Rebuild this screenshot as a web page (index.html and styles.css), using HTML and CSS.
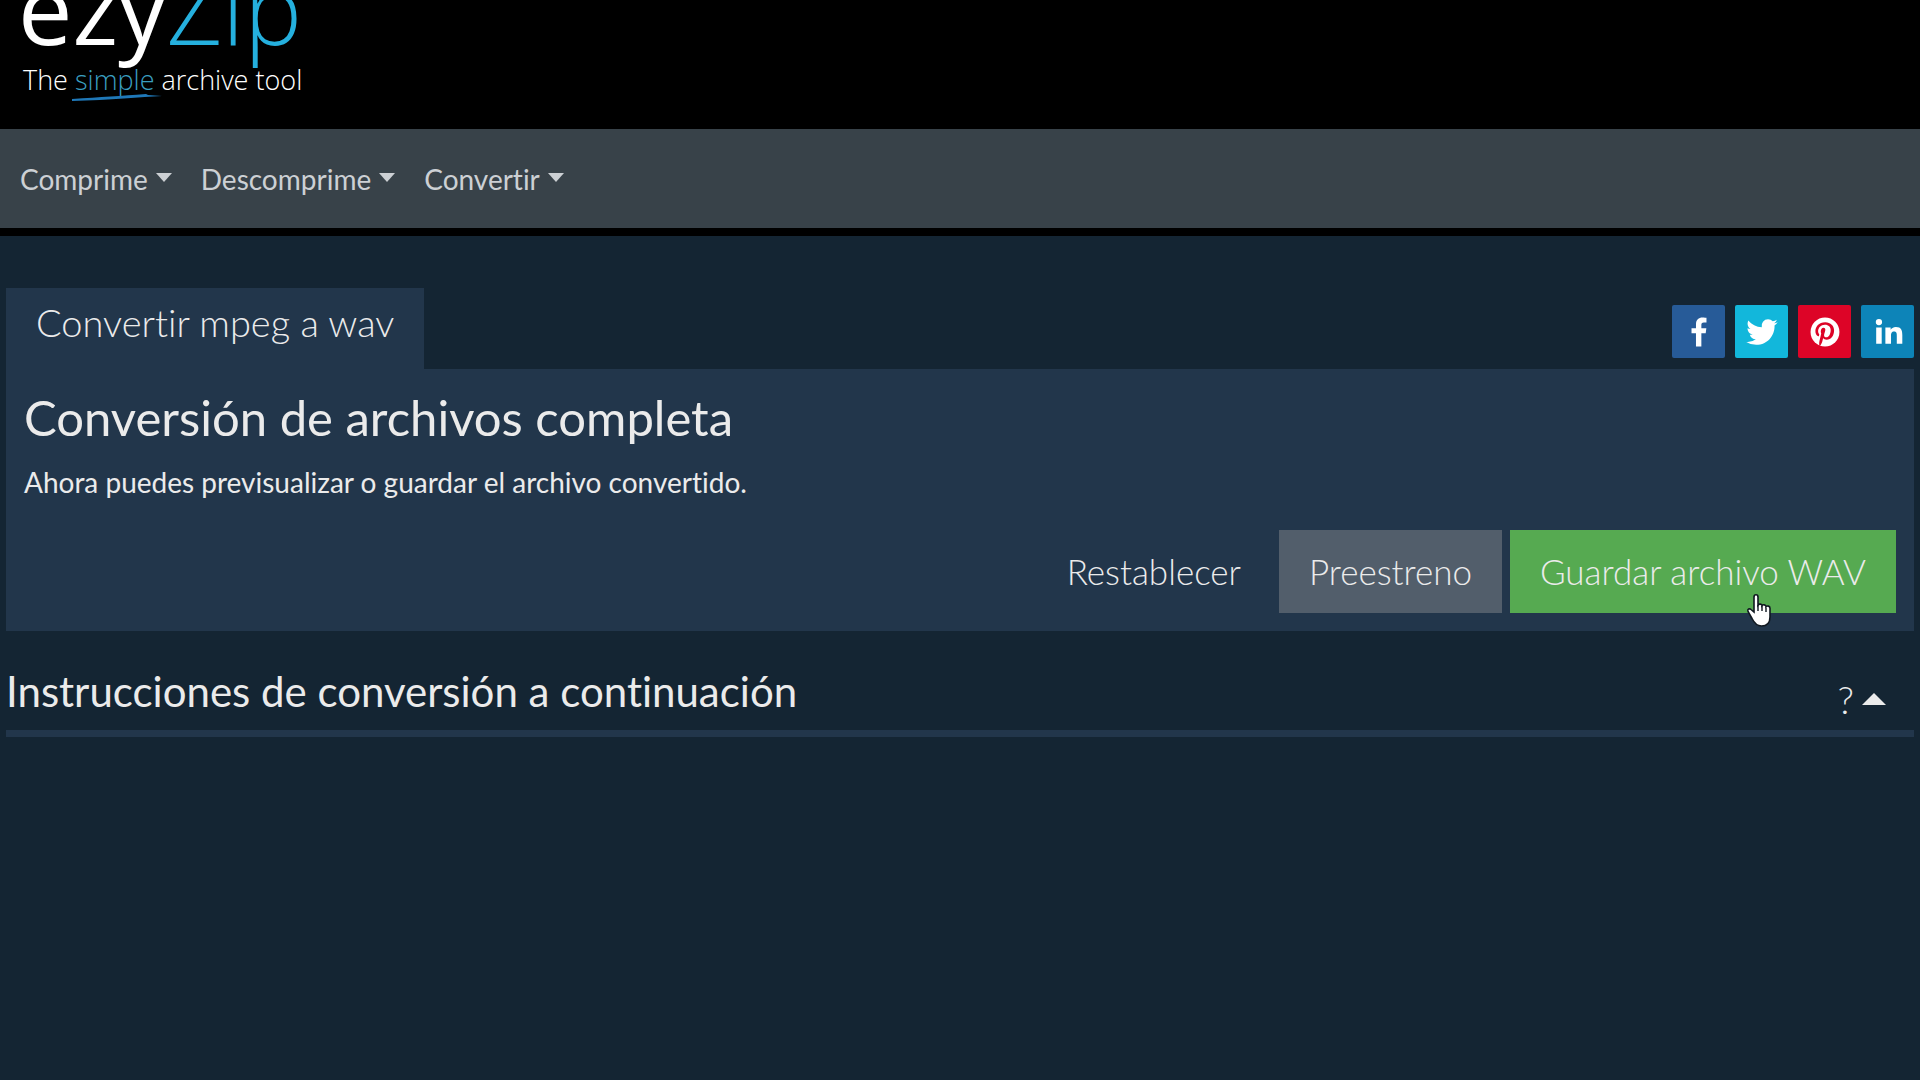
FILE: index.html
```html
<!DOCTYPE html>
<html lang="es">
<head>
  <meta charset="utf-8">
  <meta name="viewport" content="width=device-width, initial-scale=1">
  <title>Convertir mpeg a wav - ezyZip</title>
  <link rel="stylesheet" href="styles.css">
</head>
<body>
  <header class="site-header">
    <a class="logo" href="#">
      <span class="logo-name">ezy<span class="logo-zip">Zip</span></span>
      <span class="logo-tagline">The <span class="logo-simple">simple<svg class="logo-stroke" viewBox="0 0 92 8" aria-hidden="true"><path d="M1 5C30 3 50 2 75 0L77 1L91 2C70 3 40 6 1 7Z" fill="#1f78b8"/></svg></span> archive tool</span>
    </a>
  </header>

  <nav class="navbar">
    <button class="nav-link" type="button">Comprime</button>
    <button class="nav-link" type="button">Descomprime</button>
    <button class="nav-link" type="button">Convertir</button>
  </nav>

  <main class="container">
    <div class="tab-row">
      <a class="tab" href="#converter">Convertir mpeg a wav</a>
      <div class="share">
        <a class="share-btn facebook" href="#" aria-label="Facebook">
          <svg viewBox="0 0 32 32"><path d="M17.8 27V17h3.3l.5-3.9h-3.8v-2.5c0-1.1.3-1.9 1.9-1.9h2V5.200c-.4 0-1.600-.2-3-.2-3 0-5 1.800-5 5.200v2.900h-3.400V17h3.400v10z"/></svg>
        </a>
        <a class="share-btn twitter" href="#" aria-label="Twitter">
          <svg viewBox="0 0 32 32"><path d="M28 8.557a9.913 9.913 0 0 1-2.828.775 4.930 4.930 0 0 0 2.166-2.725 9.738 9.738 0 0 1-3.130 1.194 4.920 4.920 0 0 0-3.593-1.550 4.924 4.924 0 0 0-4.794 6.049c-4.090-.21-7.720-2.170-10.150-5.150a4.942 4.942 0 0 0-.665 2.477c0 1.710.870 3.214 2.190 4.100a4.968 4.968 0 0 1-2.230-.616v.060c0 2.390 1.700 4.380 3.952 4.830-.414.115-.850.174-1.297.174-.318 0-.626-.030-.928-.086a4.935 4.935 0 0 0 4.600 3.420 9.893 9.893 0 0 1-6.114 2.107c-.398 0-.790-.023-1.175-.068a13.953 13.953 0 0 0 7.550 2.213c9.056 0 14.010-7.507 14.010-14.013 0-.213-.005-.426-.015-.637.960-.695 1.795-1.560 2.455-2.550z"/></svg>
        </a>
        <a class="share-btn pinterest" href="#" aria-label="Pinterest">
          <svg viewBox="0 0 32 32"><circle cx="16" cy="16" r="11"/><path class="pin-mark" transform="translate(3 5) scale(.8)" d="M16.539 4.500c-6.277 0-9.442 4.500-9.442 8.253 0 2.272.860 4.293 2.705 5.046.303.125.574.005.662-.330.061-.231.205-.816.270-1.060.088-.331.053-.447-.191-.736-.532-.627-.873-1.439-.873-2.591 0-3.338 2.498-6.327 6.505-6.327 3.548 0 5.497 2.168 5.497 5.062 0 3.810-1.686 7.025-4.188 7.025-1.382 0-2.416-1.142-2.085-2.545.397-1.674 1.166-3.480 1.166-4.689 0-1.081-.581-1.983-1.782-1.983-1.413 0-2.548 1.462-2.548 3.419 0 1.247.421 2.091.421 2.091l-1.699 7.199c-.505 2.137-.076 4.755-.039 5.019.021.158.223.196.314.077.130-.170 1.813-2.247 2.384-4.324.162-.587.929-3.631.929-3.631.460.876 1.801 1.646 3.227 1.646 4.247 0 7.128-3.871 7.128-9.053.001-3.918-3.317-7.568-8.361-7.568z"/></svg>
        </a>
        <a class="share-btn linkedin" href="#" aria-label="LinkedIn">
          <svg viewBox="0 0 32 32"><path d="M7 12.500h4.200V25H7zM9.100 6a2.400 2.400 0 1 1 0 4.800 2.400 2.400 0 0 1 0-4.800zM14 12.500h4v1.800c.6-1.100 2-2.200 4-2.200 4.100 0 4.900 2.700 4.900 6.100V25h-4.200v-6c0-1.500 0-3.300-2-3.300s-2.400 1.500-2.400 3.200V25H14z"/></svg>
        </a>
      </div>
    </div>

    <section class="panel" id="converter">
      <h1>Conversión de archivos completa</h1>
      <p>Ahora puedes previsualizar o guardar el archivo convertido.</p>
      <div class="actions">
        <button class="btn" type="button">Restablecer</button>
        <button class="btn btn-secondary" type="button">Preestreno</button>
        <button class="btn btn-success" type="button">Guardar archivo WAV
          <svg class="cursor" viewBox="0 0 26 36" aria-hidden="true"><path d="M8 4c0-3 4-3 4 0v8c1-1.500 4-1 4 .6 1-1.400 4-.8 4 1 1.200-1.200 4-.6 4 1.600v8.800c0 6-3.500 9-8.500 9-5 0-7.500-3.500-9.500-7.500l-4-7c-1-2.400 1.500-3.400 3-2L8 19z" fill="#fff" stroke="#101820" stroke-width="1.600"/><path d="M12 12v6M16 13v5M20 14.500V19" fill="none" stroke="#101820" stroke-width="1.400"/></svg>
        </button>
      </div>
    </section>

    <section class="instructions">
      <h2>Instrucciones de conversión a continuación</h2>
      <button class="toggle" type="button">?</button>
    </section>
  </main>
</body>
</html>
```
FILE: styles.css
```css
* {
  box-sizing: border-box;
}

body {
  margin: 0;
  min-height: 100vh;
  background-color: #142533;
  color: #ebebeb;
  font-family: Lato, "Open Sans", sans-serif;
  font-size: 28px;
  font-variant-ligatures: none;
  overflow-x: hidden;
}

a {
  color: inherit;
  text-decoration: none;
}

button {
  border: none;
  background: none;
  color: inherit;
  font-family: inherit;
  font-variant-ligatures: inherit;
  cursor: pointer;
}

/* Header */
.site-header {
  display: flex;
  align-items: flex-end;
  height: 129px;
  padding: 0 18px 31px;
  overflow: hidden;
  background-color: #000;
}

.logo {
  display: flex;
  flex-direction: column;
  gap: 9px;
  font-family: "Open Sans", sans-serif;
  color: #fff;
}

.logo-name {
  font-size: 97px;
  line-height: 92px;
}

.logo-zip {
  color: #25b0de;
  font-weight: 300;
}

.logo-tagline {
  padding-left: 5px;
  font-size: 27px;
  font-weight: 300;
  line-height: 36px;
}

.logo-simple {
  position: relative;
  color: #3a9fc0;
}

.logo-stroke {
  position: absolute;
  left: -4px;
  bottom: -4px;
  width: 92px;
  height: 8px;
}

/* Menu */
.navbar {
  display: flex;
  gap: 29px;
  padding: 31px 20px 29px;
  border-bottom: 8px solid #000;
  background-color: #384249;
}

.nav-link {
  display: flex;
  align-items: center;
  gap: 8px;
  padding: 0;
  font-size: 28px;
  line-height: 39px;
  color: #ccd0d4;
}

.nav-link::after {
  content: "";
  margin-bottom: 4px;
  border-top: 9px solid;
  border-right: 8px solid transparent;
  border-left: 8px solid transparent;
}

/* Content */
.container {
  padding: 52px 6px 0;
}

.tab-row {
  display: flex;
  justify-content: space-between;
  align-items: center;
}

.tab {
  padding: 10px 30px 23px;
  background-color: #22364b;
  font-size: 38px;
  font-weight: 300;
  line-height: 48px;
}

.share {
  display: flex;
  gap: 10px;
  padding-top: 6px;
}

.share-btn {
  display: flex;
  align-items: center;
  justify-content: center;
  width: 53px;
  height: 53px;
  border-radius: 2px;
}

.share-btn svg {
  width: 42px;
  height: 42px;
  fill: #fff;
}

.facebook {
  background-color: #275b98;
}

.twitter {
  background-color: #12b7db;
}

.pinterest {
  background-color: #dd0427;
}

.share-btn .pin-mark {
  fill: #dd0427;
}

.linkedin {
  background-color: #0d84b8;
}

.panel {
  padding: 18px;
  background-color: #22364b;
}

.panel h1 {
  margin: 0;
  font-size: 49px;
  font-weight: 400;
  line-height: 60px;
}

.panel p {
  margin: 15px 0 28px;
  line-height: 40px;
}

.actions {
  display: flex;
  justify-content: flex-end;
  gap: 8px;
}

.btn {
  position: relative;
  padding: 18px 30px;
  font-size: 35px;
  font-weight: 300;
  line-height: 47px;
}

.btn-secondary {
  background-color: #525e6b;
}

.btn-success {
  background-color: #56aa51;
}

/* Hand pointer over the save button */
.cursor {
  position: absolute;
  right: 124px;
  bottom: -16px;
  width: 26px;
  height: 36px;
}

.instructions {
  display: flex;
  justify-content: space-between;
  align-items: center;
  margin-top: 32px;
  padding: 0 28px 11px 0;
  border-bottom: 7px solid #22364b;
}

.instructions h2 {
  margin: 0;
  font-size: 42px;
  font-weight: 400;
  line-height: 56px;
}

.toggle {
  display: flex;
  align-items: center;
  gap: 8px;
  padding: 16px 0 0;
  font-size: 38px;
  font-weight: 300;
  line-height: 40px;
}

.toggle::after {
  content: "";
  border-right: 12px solid transparent;
  border-bottom: 12px solid #ebebeb;
  border-left: 12px solid transparent;
}
```
